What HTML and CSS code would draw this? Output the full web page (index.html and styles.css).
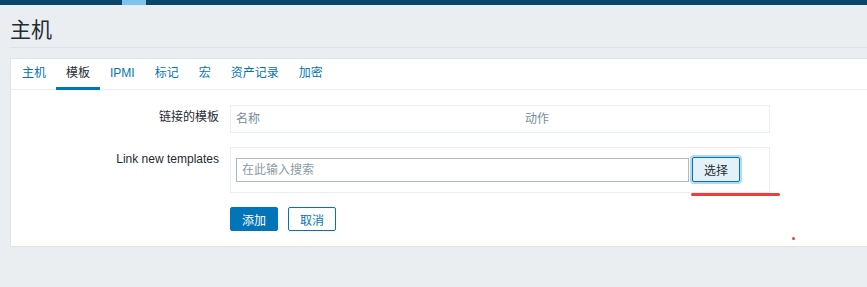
FILE: index.html
```html
<!DOCTYPE html>
<html lang="zh-CN">
<head>
    <meta charset="UTF-8">
    <title>主机</title>
    <link rel="stylesheet" href="styles.css">
</head>
<body>
    <div class="topbar"><span class="topbar-mark"></span></div>

    <div class="header">
        <h1 class="title">主机</h1>
    </div>

    <div class="panel">
        <ul class="tabs">
            <li class="tab">主机</li>
            <li class="tab active">模板</li>
            <li class="tab">IPMI</li>
            <li class="tab">标记</li>
            <li class="tab">宏</li>
            <li class="tab">资产记录</li>
            <li class="tab">加密</li>
        </ul>

        <div class="form">
            <div class="form-label">链接的模板</div>
            <div class="linked-table">
                <span class="col-name">名称</span>
                <span class="col-action">动作</span>
            </div>

            <div class="form-label">Link new templates</div>
            <div class="link-box">
                <input class="search-input" type="text" placeholder="在此输入搜索">
                <button class="select-button">选择</button>
            </div>

            <div></div>
            <div class="actions">
                <button class="btn btn-primary">添加</button>
                <button class="btn btn-alt">取消</button>
            </div>
        </div>

        <!-- hand drawn marks on the screenshot -->
        <span class="mark-line"></span>
        <span class="mark-dot"></span>
    </div>
</body>
</html>
```

FILE: styles.css
```css
body {
    margin: 0;
    background-color: #ebeef0;
    color: #1f2c33;
    font-family: "Liberation Sans", Arial, "Noto Sans CJK SC", sans-serif;
    font-size: 12px;
}

.topbar {
    height: 5px;
    background-color: #0a466a;
}

.topbar-mark {
    display: block;
    width: 24px;
    height: 5px;
    margin-left: 122px;
    background-color: #7ec3ec;
}

.header {
    margin-left: 10px;
    height: 42px;
    border-bottom: 1px solid #dfe4e7;
}

.title {
    margin: 0;
    padding-top: 13px;
    font-size: 21px;
    line-height: 24px;
    font-weight: normal;
}

.panel {
    position: relative;
    margin: 10px 0 0 10px;
    background-color: #fff;
    border: 1px solid #dfe4e7;
    border-right: none;
}

.tabs {
    display: flex;
    margin: 0;
    padding: 0 0 0 1px;
    list-style: none;
    border-bottom: 1px solid #ebeef0;
}

.tab {
    padding: 0 10px;
    line-height: 28px;
    border-bottom: 3px solid transparent;
    margin-bottom: -1px;
    color: #0275b8;
}

.tab.active {
    color: #1f2c33;
    border-bottom-color: #0275b8;
}

.form {
    display: grid;
    grid-template-columns: 198px 540px;
    column-gap: 11px;
    row-gap: 14px;
    padding: 15px 0 15px 10px;
}

.form-label {
    text-align: right;
    padding-top: 4px;
    line-height: 16px;
}

.linked-table {
    display: flex;
    height: 26px;
    line-height: 26px;
    padding: 0 5px;
    border: 1px solid #ebeef0;
    color: #768d99;
}

.col-name {
    width: 289px;
}

.link-box {
    display: flex;
    align-items: flex-start;
    padding: 9px 5px 10px;
    border: 1px solid #ebeef0;
}

.search-input {
    box-sizing: border-box;
    width: 453px;
    height: 24px;
    margin: 1px 0 0 0;
    padding: 0 5px;
    border: 1px solid #acbbc2;
    font-family: inherit;
    font-size: 12px;
    color: #1f2c33;
}

.search-input::placeholder {
    color: #8c9ba3;
}

.select-button {
    box-sizing: border-box;
    width: 48px;
    height: 25px;
    margin-left: 3px;
    padding: 0;
    background-color: #e5f1f9;
    color: #1f2c33;
    border: 1px solid #0275b8;
    border-radius: 2px;
    box-shadow: 0 0 0 2px #b3d8f3;
    font-family: inherit;
    font-size: 12px;
}

.actions {
    display: flex;
    gap: 10px;
}

.btn {
    box-sizing: border-box;
    width: 48px;
    height: 24px;
    padding: 0;
    border: 1px solid #0275b8;
    border-radius: 2px;
    font-family: inherit;
    font-size: 12px;
}

.btn-primary {
    background-color: #0275b8;
    color: #fff;
}

.btn-alt {
    background-color: #fff;
    color: #0275b8;
}

.mark-line {
    position: absolute;
    left: 680px;
    top: 134px;
    width: 89px;
    height: 3px;
    border-radius: 2px;
    background-color: #f23c3c;
}

.mark-dot {
    position: absolute;
    left: 781px;
    top: 178px;
    width: 3px;
    height: 3px;
    border-radius: 50%;
    background-color: #f23c3c;
}
```
